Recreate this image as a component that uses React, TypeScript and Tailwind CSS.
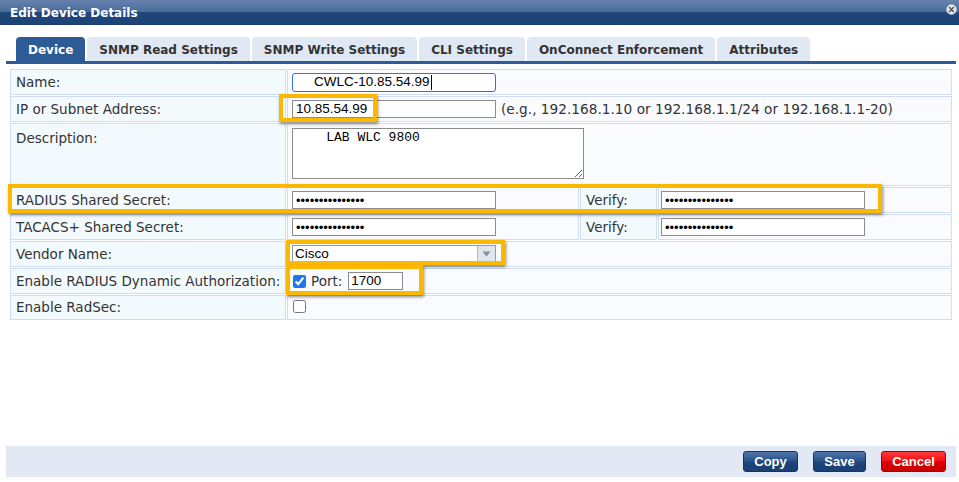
import React from "react";

const tabs = ["Device", "SNMP Read Settings", "SNMP Write Settings", "CLI Settings", "OnConnect Enforcement", "Attributes"];

const labelCls =
  "border border-[#d0ddf1] bg-[#f3fafd] pl-[5px] flex items-center text-[#333] text-[13.5px] font-['DejaVu_Sans',Verdana,sans-serif]";
const valBase = "border border-[#d0ddf1] bg-[#fafbfe] flex items-center";
const valCls = valBase + " pl-[4px]";
const inputCls =
  "h-[18px] w-[204px] border border-[#8c8c8c] bg-white pl-[3px] flex items-center text-[13.5px] text-black font-['Liberation_Sans',Arial,sans-serif] leading-none";
const dotsCls =
  "h-[18px] w-[204px] border border-[#8c8c8c] bg-white pl-[3px] flex items-center text-[13px] text-black font-['Liberation_Sans',Arial,sans-serif] leading-none";

const DOTS = "•••••••••••••••";

function Hl({ cls }: { cls: string }) {
  return (
    <div
      className={
        "absolute border-[4px] border-[#fab800] shadow-[1px_2px_3px_rgba(0,0,0,0.45)] pointer-events-none " + cls
      }
    />
  );
}

export default function App() {
  return (
    <div className="relative w-[959px] h-[482px] bg-white overflow-hidden flex flex-col font-['DejaVu_Sans',Verdana,sans-serif]">
      {/* Title bar */}
      <div className="h-[25px] flex items-center justify-between pl-[10px] pr-[2px] bg-[linear-gradient(to_bottom,#6582ac_0%,#4a6b9b_46%,#20477a_50%,#1d4477_96%,#163764_100%)]">
        <span className="text-white text-[12px] font-bold">Edit Device Details</span>
        <svg width="11" height="11" viewBox="0 0 11 11" className="-mt-[6px]">
          <circle cx="5.5" cy="5.5" r="5" fill="#e4e6ea" stroke="#b8bcc4" strokeWidth="0.8" />
          <path d="M3.6 3.6 L7.4 7.4 M7.4 3.6 L3.6 7.4" stroke="#4a4f58" strokeWidth="1.4" strokeLinecap="round" />
        </svg>
      </div>

      <div className="flex-1 flex flex-col ml-[6px] mr-[3px]">
        {/* Tabs */}
        <div className="mt-[12px] pl-[10px] flex items-end gap-[2px]">
          {tabs.map((t, i) => (
            <div
              key={t}
              className={
                "h-[24px] px-[12px] pt-[1px] flex items-center rounded-t-[4px] text-[12px] font-bold " +
                (i === 0 ? "bg-[#2c5b96] text-white" : "bg-[#e0e8f3] text-[#333]")
              }
            >
              {t}
            </div>
          ))}
        </div>
        <div className="h-[3px] bg-[#2c5b96]" />

        {/* Form grid */}
        <div className="mt-[5px] ml-[4px] mr-[4px] grid grid-cols-[276px_292px_77px_1fr] grid-rows-[26px_26px_63px_26px_26px_26px_26px_25px] gap-[1px]">
          {/* Name */}
          <div className={labelCls}>Name:</div>
          <div className={valCls + " col-span-3"}>
            <div className="h-[19px] w-[204px] border-[1.5px] border-[#2f74d6] rounded-[3px] bg-white pl-[21px] flex items-center text-[13.5px] text-black font-['Liberation_Sans',Arial,sans-serif] leading-none">
              CWLC-10.85.54.99
              <span className="ml-[1px] h-[15px] border-l border-black" />
            </div>
          </div>

          {/* IP */}
          <div className={labelCls}>IP or Subnet Address:</div>
          <div className={valCls + " col-span-3 gap-[5px]"}>
            <div className={inputCls}>10.85.54.99</div>
            <span className="text-[13.7px] text-[#333]">(e.g., 192.168.1.10 or 192.168.1.1/24 or 192.168.1.1-20)</span>
          </div>

          {/* Description */}
          <div className={labelCls + " items-start pt-[4px]"}>Description:</div>
          <div className={valCls + " col-span-3 items-start pt-[4px]"}>
            <textarea
              readOnly
              defaultValue={"    LAB WLC 9800"}
              className="h-[51px] w-[292px] border border-[#8c8c8c] bg-white px-[2px] pt-[1px] text-[13px] leading-[15px] text-black font-['Liberation_Mono','Courier_New',monospace] whitespace-pre resize outline-none"
            />
          </div>

          {/* RADIUS */}
          <div className={labelCls}>RADIUS Shared Secret:</div>
          <div className={valCls}>
            <div className={dotsCls}>{DOTS}</div>
          </div>
          <div className={labelCls}>Verify:</div>
          <div className={valBase + " pl-[2px]"}>
            <div className={dotsCls}>{DOTS}</div>
          </div>

          {/* TACACS */}
          <div className={labelCls}>TACACS+ Shared Secret:</div>
          <div className={valCls}>
            <div className={dotsCls}>{DOTS}</div>
          </div>
          <div className={labelCls}>Verify:</div>
          <div className={valBase + " pl-[2px]"}>
            <div className={dotsCls}>{DOTS}</div>
          </div>

          {/* Vendor */}
          <div className={labelCls}>Vendor Name:</div>
          <div className={valCls + " col-span-3"}>
            <div className="h-[18px] w-[204px] border border-[#9a9a9a] bg-white flex items-stretch text-[13.5px] text-black font-['Liberation_Sans',Arial,sans-serif] leading-none">
              <span className="flex-1 flex items-center pl-[2px]">Cisco</span>
              <span className="w-[18px] bg-[#dfe6f0] border-l border-[#b4bccb] flex items-center justify-center">
                <svg width="9" height="6" viewBox="0 0 9 6">
                  <path d="M0.5 0.5 L8.5 0.5 L4.5 5.5 Z" fill="#8a8f98" />
                </svg>
              </span>
            </div>
          </div>

          {/* Dynamic auth */}
          <div className={labelCls}>Enable RADIUS Dynamic Authorization:</div>
          <div className={valBase + " col-span-3 pl-[5px]"}>
            <input type="checkbox" defaultChecked className="w-[13px] h-[13px] m-0 accent-[#1f77f0]" />
            <span className="ml-[5px] text-[13.5px] text-[#333]">Port:</span>
            <div className="ml-[6px] h-[18px] w-[55px] border border-[#8c8c8c] bg-white pl-[2px] flex items-center text-[13.5px] text-black font-['Liberation_Sans',Arial,sans-serif] leading-none">
              1700
            </div>
          </div>

          {/* RadSec */}
          <div className={labelCls}>Enable RadSec:</div>
          <div className={valBase + " col-span-3 pl-[5px]"}>
            <input type="checkbox" className="w-[13px] h-[13px] m-0 -mt-[2px]" />
          </div>
        </div>

        <div className="flex-1" />

        {/* Footer */}
        <div className="h-[31px] mb-[5px] bg-[#e2e8f4] flex items-start justify-end pt-[5px] pr-[10px] gap-[15px]">
          <button className="h-[21px] w-[55px] rounded-[3px] border border-[#17345e] bg-[linear-gradient(to_bottom,#4f76aa_0%,#2a5289_48%,#1d457b_52%,#1a4074_100%)] text-white text-[13px] font-bold font-['Liberation_Sans',Arial,sans-serif] flex items-center justify-center">
            Copy
          </button>
          <button className="h-[21px] w-[53px] rounded-[3px] border border-[#17345e] bg-[linear-gradient(to_bottom,#4f76aa_0%,#2a5289_48%,#1d457b_52%,#1a4074_100%)] text-white text-[13px] font-bold font-['Liberation_Sans',Arial,sans-serif] flex items-center justify-center">
            Save
          </button>
          <button className="h-[21px] w-[65px] rounded-[3px] border border-[#a80000] bg-[linear-gradient(to_bottom,#ff3a3a_0%,#ee1111_48%,#dd0000_52%,#c80000_100%)] text-white text-[13px] font-bold font-['Liberation_Sans',Arial,sans-serif] flex items-center justify-center">
            Cancel
          </button>
        </div>
      </div>

      {/* Annotation highlights */}
      <Hl cls="left-[279px] top-[94px] w-[98px] h-[28px]" />
      <Hl cls="left-[8px] top-[184px] w-[874px] h-[29px]" />
      <Hl cls="left-[286px] top-[240px] w-[219px] h-[25px]" />
      <Hl cls="left-[286px] top-[265px] w-[137px] h-[30px]" />
    </div>
  );
}
